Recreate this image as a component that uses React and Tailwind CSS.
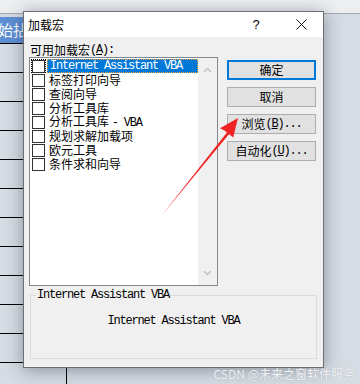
const cjk = "inline-block font-['Noto_Sans_CJK_SC','Noto_Sans',sans-serif] text-[12px] leading-[14px]";
const mono = "inline-block font-['Liberation_Mono','Noto_Sans_CJK_SC',monospace] text-[12px] tracking-[-1.2px] leading-[14px]";

const addins = [
  { label: "Internet Assistant VBA", latin: true },
  { label: "标签打印向导" },
  { label: "查阅向导" },
  { label: "分析工具库" },
  { label: "分析工具库 - VBA", mixed: true },
  { label: "规划求解加载项" },
  { label: "欧元工具" },
  { label: "条件求和向导" },
];

function Chevron({ down }) {
  return (
    <svg width="9" height="6" viewBox="0 0 9 6" className="block">
      <path
        d={down ? "M1 1 L4.5 4.5 L8 1" : "M1 5 L4.5 1.5 L8 5"}
        fill="none"
        stroke="#c2c2c2"
        strokeWidth="1.5"
      />
    </svg>
  );
}

function ListRow({ item, index }) {
  const selected = index === 0;
  return (
    <div className="flex items-center h-[14px]">
      <div
        className={`ml-[1px] w-[15px] h-[14px] flex items-center justify-center ${
          selected ? "border border-dotted border-black" : ""
        }`}
      >
        <div className="w-[13px] h-[13px] shrink-0 border border-[#333] bg-white" />
      </div>
      <div
        className={`ml-[1px] flex-1 h-[14px] flex items-center pl-[2px] whitespace-nowrap overflow-hidden ${
          selected ? "bg-[#0078d7] text-white border border-dotted border-[#f7a13a] pl-[1px]" : "text-black"
        }`}
      >
        {item.latin ? (
          <span className={mono}>{item.label}</span>
        ) : item.mixed ? (
          <span className={cjk}>
            分析工具库 <span className={mono}>- VBA</span>
          </span>
        ) : (
          <span className={cjk}>{item.label}</span>
        )}
      </div>
    </div>
  );
}

function DialogButton({ children, primary }) {
  return (
    <div
      className={`w-[89px] h-[20px] flex items-center justify-center bg-[#e1e1e1] text-black ${
        primary ? "border-2 border-[#0078d7]" : "border border-[#adadad]"
      }`}
    >
      {children}
    </div>
  );
}

export default function App() {
  return (
    <div className="relative w-[360px] h-[384px] overflow-hidden bg-[#d6dce3]">
      {/* Spreadsheet behind the dialog */}
      <div className="h-[14px] bg-[#eceef1] border-b border-[#a5a8ad]" />
      <div className="flex">
        <div className="w-[67px] h-[370px] border-r border-black">
          <div className="h-[30px] pt-[3px] border-b border-black">
            <div className="w-[40px] h-[26px] bg-[#5d8fd4] flex items-center text-white font-['Noto_Sans_CJK_SC',sans-serif] text-[15px] leading-[20px] -ml-[2px]">
              始拈
            </div>
          </div>
          {Array.from({ length: 11 }).map((_, i) => (
            <div key={i} className="h-[29px] border-b border-black" />
          ))}
        </div>
      </div>

      {/* Dialog window */}
      <div className="absolute left-[23px] top-[11px] w-[301px] h-[357px] border border-[#6f6f6f] bg-[#f0f0f0] flex flex-col shadow-[0_2px_16px_rgba(40,50,70,0.45)]">
        <div className="h-[25px] bg-white flex items-center">
          <span className={`${cjk} pl-[4px] text-black`}>加载宏</span>
          <div className="ml-auto flex items-center">
            <div className="w-[46px] flex justify-center font-['Liberation_Sans',sans-serif] text-[13px] leading-[15px] text-black">?</div>
            <div className="w-[44px] flex justify-center">
              <svg width="11" height="11" viewBox="0 0 11 11">
                <path d="M0.5 0.5 L10.5 10.5 M10.5 0.5 L0.5 10.5" stroke="#111" strokeWidth="1" />
              </svg>
            </div>
          </div>
        </div>

        <div className="flex-1 pl-[5px] pt-[6px]">
          <div className="flex">
            <div className="flex flex-col">
              <div className="ml-[1px] h-[14px] flex text-black">
                <span className={cjk}>可用加载宏</span>
                <span className={mono}>
                  (<span className="underline">A</span>):
                </span>
              </div>
              <div className="w-[189px] h-[229px] border border-[#828790] bg-white flex">
                <div className="flex-1 pt-[1px] flex flex-col">
                  {addins.map((item, i) => (
                    <ListRow key={item.label} item={item} index={i} />
                  ))}
                </div>
                <div className="w-[19px] bg-[#f0f0f0] flex flex-col items-center justify-between py-[9px]">
                  <Chevron />
                  <Chevron down />
                </div>
              </div>
            </div>

            <div className="ml-[9px] mt-[17px] flex flex-col gap-[7px]">
              <DialogButton primary>
                <span className={cjk}>确定</span>
              </DialogButton>
              <DialogButton>
                <span className={cjk}>取消</span>
              </DialogButton>
              <DialogButton>
                <span className={cjk}>浏览</span>
                <span className={mono}>
                  (<span className="underline">B</span>)...
                </span>
              </DialogButton>
              <DialogButton>
                <span className={cjk}>自动化</span>
                <span className={mono}>
                  (<span className="underline">U</span>)...
                </span>
              </DialogButton>
            </div>
          </div>

          <div className="relative ml-[1px] mt-[9px] w-[287px] h-[64px] border border-[#dcdcdc]">
            <span className={`${mono} absolute left-[5px] -top-[8px] bg-[#f0f0f0] px-[1px] text-black`}>
              Internet Assistant VBA
            </span>
            <div className="pt-[10px] text-center text-black">
              <span className={mono}>Internet Assistant VBA</span>
            </div>
          </div>
        </div>
      </div>

      {/* Red annotation arrow */}
      <svg className="absolute inset-0 pointer-events-none" width="360" height="384" viewBox="0 0 360 384">
        <polygon points="162,215 227.3,131.9 229.6,133.6" fill="#f02424" />
        <polygon points="238,118 233.2,137.4 228.8,134 224.4,130.6 220,128.2" fill="#f02424" />
      </svg>

      {/* Watermark */}
      <div className="absolute right-[5px] bottom-[3px] font-['Noto_Sans_CJK_SC',sans-serif] text-[12px] leading-[14px] text-[#f4f5f7] [text-shadow:0_0_1px_#9aa0a8]">
        CSDN @未来之窗软件服务
      </div>
    </div>
  );
}
